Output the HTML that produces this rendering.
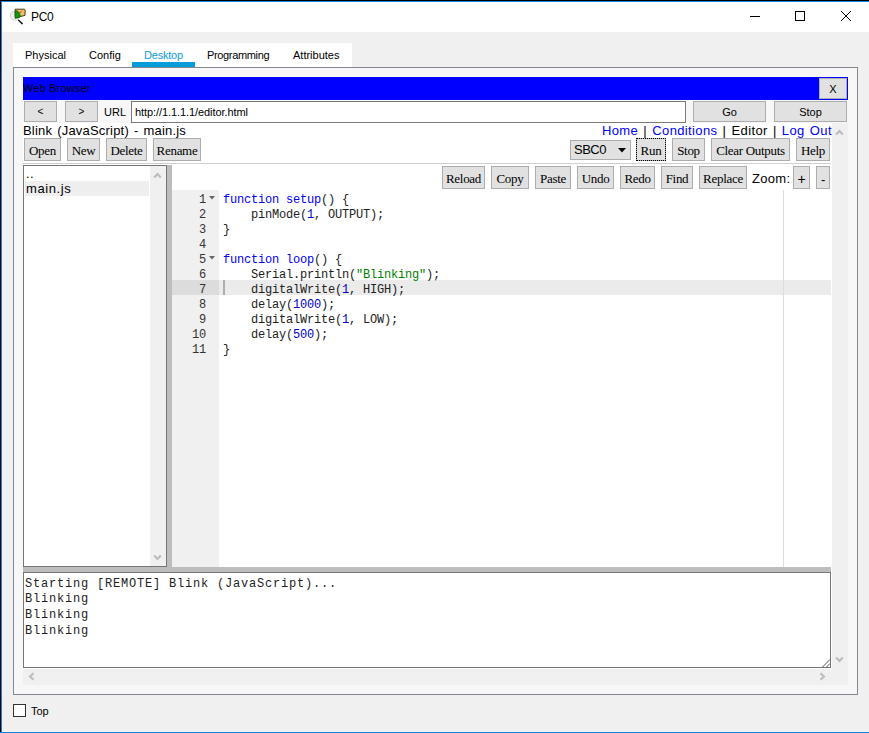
<!DOCTYPE html>
<html><head><meta charset="utf-8">
<style>
*{box-sizing:border-box;margin:0;padding:0}
html,body{width:869px;height:733px;overflow:hidden;background:#f0f0f0;font-family:"Liberation Sans",sans-serif;position:relative}
.a{position:absolute}
.btn{position:absolute;background:#e1e1e1;border:1px solid #adadad;font-family:"Liberation Serif",serif;font-size:13px;letter-spacing:-0.3px;color:#000;text-align:center;white-space:nowrap}
.wbtn{position:absolute;background:#e1e1e1;border:1px solid #adadad;font-family:"Liberation Sans",sans-serif;font-size:11px;color:#000;text-align:center;white-space:nowrap}
.code{font-family:"Liberation Mono",monospace;font-size:11.667px;white-space:pre;color:#000}
.ln{position:absolute;left:172px;width:34px;text-align:right;font-family:"Liberation Mono",monospace;font-size:12px;letter-spacing:-0.2px;line-height:15px;margin-top:3px;color:#333}
.cl{position:absolute;left:223px;font-family:"Liberation Mono",monospace;font-size:12px;letter-spacing:-0.2px;line-height:15px;margin-top:3px;white-space:pre;color:#222}
.kw{color:#0000ff}
.fn{color:#000}
.num{color:#0000cd}
.str{color:#008000}
</style></head><body>
<!-- window border -->
<div class="a" style="left:0;top:0;width:869px;height:1px;background:#000"></div>
<div class="a" style="left:0;top:0;width:1px;height:733px;background:#000"></div>
<div class="a" style="left:1px;top:1px;width:868px;height:1px;background:#1883d7"></div>
<div class="a" style="left:1px;top:1px;width:1px;height:732px;background:#1883d7"></div>
<div class="a" style="left:0;top:732px;width:869px;height:1px;background:#1883d7"></div>
<!-- title bar -->
<div class="a" style="left:2px;top:2px;width:867px;height:30px;background:#fff"></div>
<svg class="a" style="left:0;top:0" width="30" height="30" viewBox="0 0 30 30">
  <circle cx="14.8" cy="15.6" r="4.6" fill="#efefef" stroke="#d4d4d4" stroke-width="1"/>
  <path d="M15.2 9.2 L24.6 9.2 L25.2 10.2 L25 15.4 L20.2 16.6 L15.2 17.2 Z" fill="#f0c060" stroke="#3a2a08" stroke-width="0.9"/>
  <path d="M15.6 10.2 L19.5 12.6 L21.8 11.6 M19.5 12.6 L19.8 14.6" fill="none" stroke="#6a5016" stroke-width="0.7"/>
  <path d="M15 11 L17.5 11.2 L20.6 15.8 L19.6 17.4 L15.2 18.4 Z" fill="#0a9a0a" stroke="#064806" stroke-width="0.6"/>
  <path d="M18.6 20.2 L22.2 23.6" stroke="#1a1a1a" stroke-width="1.5" stroke-linecap="round"/>
</svg>
<div class="a" style="left:31px;top:10px;font-size:12px;color:#000;letter-spacing:-0.3px">PC0</div>
<div class="a" style="left:750px;top:16px;width:10px;height:1px;background:#000"></div>
<div class="a" style="left:795px;top:11px;width:10px;height:10px;border:1px solid #000"></div>
<svg class="a" style="left:840px;top:10px" width="12" height="12" viewBox="0 0 12 12"><path d="M1 1 L11 11 M11 1 L1 11" stroke="#000" stroke-width="1"/></svg>

<!-- tab bar -->
<div class="a" style="left:13px;top:43px;width:339px;height:24px;background:#fff"></div>
<div class="a" style="left:25px;top:49px;font-size:11px">Physical</div>
<div class="a" style="left:89px;top:49px;font-size:11px">Config</div>
<div class="a" style="left:144px;top:49px;font-size:11px;letter-spacing:-0.2px;color:#0e9cdb">Desktop</div>
<div class="a" style="left:132px;top:62px;width:63px;height:5px;background:#069bd9"></div>
<div class="a" style="left:207px;top:49px;font-size:11px;letter-spacing:-0.35px">Programming</div>
<div class="a" style="left:293px;top:49px;font-size:11px">Attributes</div>

<!-- panel -->
<div class="a" style="left:13px;top:67px;width:845px;height:628px;background:#f7f7f7;border:1px solid #828790"></div>

<!-- browser title -->
<div class="a" style="left:23px;top:77px;width:825px;height:23px;background:#0000ff"></div>
<div class="a" style="left:23px;top:82px;font-size:11px;letter-spacing:0.15px;color:#000">Web Browser</div>
<div class="wbtn" style="left:819px;top:78px;width:28px;height:21px;font-size:11px;line-height:21px">X</div>

<!-- url row -->
<div class="wbtn" style="left:24px;top:101px;width:33px;height:21px;line-height:20px;font-size:10px">&lt;</div>
<div class="wbtn" style="left:65px;top:101px;width:33px;height:21px;line-height:20px;font-size:10px">&gt;</div>
<div class="a" style="left:104px;top:106px;font-size:11px">URL</div>
<div class="a" style="left:131px;top:101px;width:555px;height:22px;background:#fff;border:1px solid #7a7a7a"></div>
<div class="a" style="left:135px;top:106px;font-size:11px;letter-spacing:-0.08px">http://1.1.1.1/editor.html</div>
<div class="wbtn" style="left:693px;top:101px;width:73px;height:21px;line-height:21px">Go</div>
<div class="wbtn" style="left:774px;top:101px;width:73px;height:21px;line-height:21px">Stop</div>

<!-- page content -->
<div class="a" style="left:23px;top:123px;width:809px;height:546px;background:#fff"></div>
<!-- page vscroll -->
<div class="a" style="left:832px;top:123px;width:16px;height:562px;background:#f0f0f0"></div>
<!-- page hscroll -->
<div class="a" style="left:23px;top:669px;width:809px;height:16px;background:#f0f0f0"></div>

<div class="a" style="left:23px;top:123px;font-size:13px;letter-spacing:0.2px;word-spacing:1.2px;color:#000">Blink (JavaScript) - main.js</div>
<div class="a" style="left:602px;top:123px;font-size:13px;letter-spacing:0.37px;word-spacing:1.2px;color:#000;white-space:pre"><span style="color:#0000ff">Home</span> | <span style="color:#0000ff">Conditions</span> | Editor | <span style="color:#0000ff">Log Out</span></div>

<div class="btn" style="left:24px;top:138px;width:37px;height:23px;line-height:24px">Open</div>
<div class="btn" style="left:67px;top:138px;width:33px;height:23px;line-height:24px">New</div>
<div class="btn" style="left:106px;top:138px;width:41px;height:23px;line-height:24px">Delete</div>
<div class="btn" style="left:153px;top:138px;width:48px;height:23px;line-height:24px">Rename</div>

<div class="a" style="left:570px;top:140px;width:61px;height:20px;background:#e1e1e1;border:1px solid #adadad"></div>
<div class="a" style="left:574px;top:142px;font-size:13px;letter-spacing:-0.5px">SBC0</div>
<svg class="a" style="left:618px;top:148px" width="8" height="5"><path d="M0 0 L8 0 L4 4.5 Z" fill="#000"/></svg>
<div class="btn" style="left:636px;top:138px;width:30px;height:23px;line-height:24px;outline:1px dotted #000;outline-offset:-1px">Run</div>
<div class="btn" style="left:672px;top:138px;width:33px;height:23px;line-height:24px">Stop</div>
<div class="btn" style="left:711px;top:138px;width:79px;height:23px;line-height:24px">Clear Outputs</div>
<div class="btn" style="left:796px;top:138px;width:34px;height:23px;line-height:24px">Help</div>

<div class="a" style="left:23px;top:163px;width:808px;height:1px;background:#d0d0d0"></div>

<!-- file list -->
<div class="a" style="left:23px;top:165px;width:144px;height:402px;background:#fff;border:1px solid #767676"></div>
<div class="a" style="left:150px;top:166px;width:16px;height:400px;background:#f0f0f0"></div>
<div class="a" style="left:25px;top:181px;width:124px;height:15px;background:#eee"></div>
<div class="a" style="left:26px;top:166px;font-size:13px;letter-spacing:0.4px">..</div>
<div class="a" style="left:26px;top:181px;font-size:13px;letter-spacing:0.6px">main.js</div>

<!-- splitters -->
<div class="a" style="left:167px;top:165px;width:5px;height:402px;background:#bdbdbd"></div>
<div class="a" style="left:23px;top:567px;width:808px;height:5px;background:#bdbdbd"></div>

<!-- editor toolbar -->
<div class="btn" style="left:442px;top:166px;width:43px;height:23px;line-height:24px">Reload</div>
<div class="btn" style="left:491px;top:166px;width:38px;height:23px;line-height:24px">Copy</div>
<div class="btn" style="left:535px;top:166px;width:36px;height:23px;line-height:24px">Paste</div>
<div class="btn" style="left:577px;top:166px;width:37px;height:23px;line-height:24px">Undo</div>
<div class="btn" style="left:620px;top:166px;width:35px;height:23px;line-height:24px">Redo</div>
<div class="btn" style="left:661px;top:166px;width:32px;height:23px;line-height:24px">Find</div>
<div class="btn" style="left:699px;top:166px;width:48px;height:23px;line-height:24px">Replace</div>
<div class="a" style="left:752px;top:171px;font-size:13px;letter-spacing:0.3px">Zoom:</div>
<div class="btn" style="left:793px;top:166px;width:17px;height:23px;line-height:24px;font-family:'Liberation Sans';font-size:14px">+</div>
<div class="btn" style="left:816px;top:166px;width:14px;height:23px;line-height:26px;font-family:'Liberation Sans';font-size:13px">-</div>

<!-- editor -->
<div class="a" style="left:172px;top:190px;width:47px;height:377px;background:#f0f0f0"></div>
<div class="a" style="left:172px;top:280px;width:47px;height:15px;background:#dcdcdc"></div>
<div class="a" style="left:219px;top:280px;width:612px;height:15px;background:#ebebeb"></div>
<div class="a" style="left:223px;top:280px;width:2px;height:15px;background:#adadad"></div>
<div class="a" style="left:783px;top:190px;width:1px;height:377px;background:#dddddd"></div>


<div class="ln" style="top:190px">1</div>
<div class="ln" style="top:205px">2</div>
<div class="ln" style="top:220px">3</div>
<div class="ln" style="top:235px">4</div>
<div class="ln" style="top:250px">5</div>
<div class="ln" style="top:265px">6</div>
<div class="ln" style="top:280px">7</div>
<div class="ln" style="top:295px">8</div>
<div class="ln" style="top:310px">9</div>
<div class="ln" style="top:325px">10</div>
<div class="ln" style="top:340px">11</div>
<svg class="a" style="left:209px;top:196px" width="7" height="4"><path d="M0 0 L6 0 L3 3.5 Z" fill="#666"/></svg>
<svg class="a" style="left:209px;top:256px" width="7" height="4"><path d="M0 0 L6 0 L3 3.5 Z" fill="#666"/></svg>

<div class="cl" style="top:190px"><span class="kw">function</span> <span class="kw">setup</span>() {</div>
<div class="cl" style="top:205px">    pinMode(<span class="num">1</span>, OUTPUT);</div>
<div class="cl" style="top:220px">}</div>
<div class="cl" style="top:250px"><span class="kw">function</span> <span class="kw">loop</span>() {</div>
<div class="cl" style="top:265px">    Serial.println(<span class="str">"Blinking"</span>);</div>
<div class="cl" style="top:280px">    digitalWrite(<span class="num">1</span>, HIGH);</div>
<div class="cl" style="top:295px">    delay(<span class="num">1000</span>);</div>
<div class="cl" style="top:310px">    digitalWrite(<span class="num">1</span>, LOW);</div>
<div class="cl" style="top:325px">    delay(<span class="num">500</span>);</div>
<div class="cl" style="top:340px">}</div>

<!-- output -->
<div class="a" style="left:23px;top:572px;width:808px;height:96px;background:#fff;border:1px solid #767676"></div>
<div class="a" style="left:25px;top:576.5px;font-family:'Liberation Mono',monospace;font-size:12px;letter-spacing:0.8px;line-height:15.9px;white-space:pre;color:#222">Starting [REMOTE] Blink (JavaScript)...
Blinking
Blinking
Blinking</div>


<!-- chevrons -->
<svg class="a" style="left:153px;top:171px" width="9" height="8" viewBox="0 0 9 8"><path d="M1.2 6.5 L4.5 3 L7.8 6.5" fill="none" stroke="#bcbcbc" stroke-width="2.1"/></svg>
<svg class="a" style="left:153px;top:554px" width="9" height="8" viewBox="0 0 9 8"><path d="M1.2 1.5 L4.5 5 L7.8 1.5" fill="none" stroke="#bcbcbc" stroke-width="2.1"/></svg>
<svg class="a" style="left:835px;top:128px" width="9" height="8" viewBox="0 0 9 8"><path d="M1.2 6.5 L4.5 3 L7.8 6.5" fill="none" stroke="#bcbcbc" stroke-width="2.1"/></svg>
<svg class="a" style="left:835px;top:656px" width="9" height="8" viewBox="0 0 9 8"><path d="M1.2 1.5 L4.5 5 L7.8 1.5" fill="none" stroke="#bcbcbc" stroke-width="2.1"/></svg>
<svg class="a" style="left:27px;top:672px" width="8" height="9" viewBox="0 0 8 9"><path d="M6.5 1.2 L3 4.5 L6.5 7.8" fill="none" stroke="#bcbcbc" stroke-width="2.1"/></svg>
<svg class="a" style="left:819px;top:672px" width="8" height="9" viewBox="0 0 8 9"><path d="M1.5 1.2 L5 4.5 L1.5 7.8" fill="none" stroke="#bcbcbc" stroke-width="2.1"/></svg>
<!-- resize grip -->
<svg class="a" style="left:822px;top:659px" width="8" height="8" viewBox="0 0 8 8"><path d="M0.5 8 L8 0.5 M4.5 8 L8 4.5" fill="none" stroke="#555" stroke-width="1"/></svg>
<!-- bottom checkbox -->
<div class="a" style="left:13px;top:704px;width:13px;height:13px;background:#fff;border:1px solid #333"></div>
<div class="a" style="left:31px;top:705px;font-size:11px">Top</div>
</body></html>
